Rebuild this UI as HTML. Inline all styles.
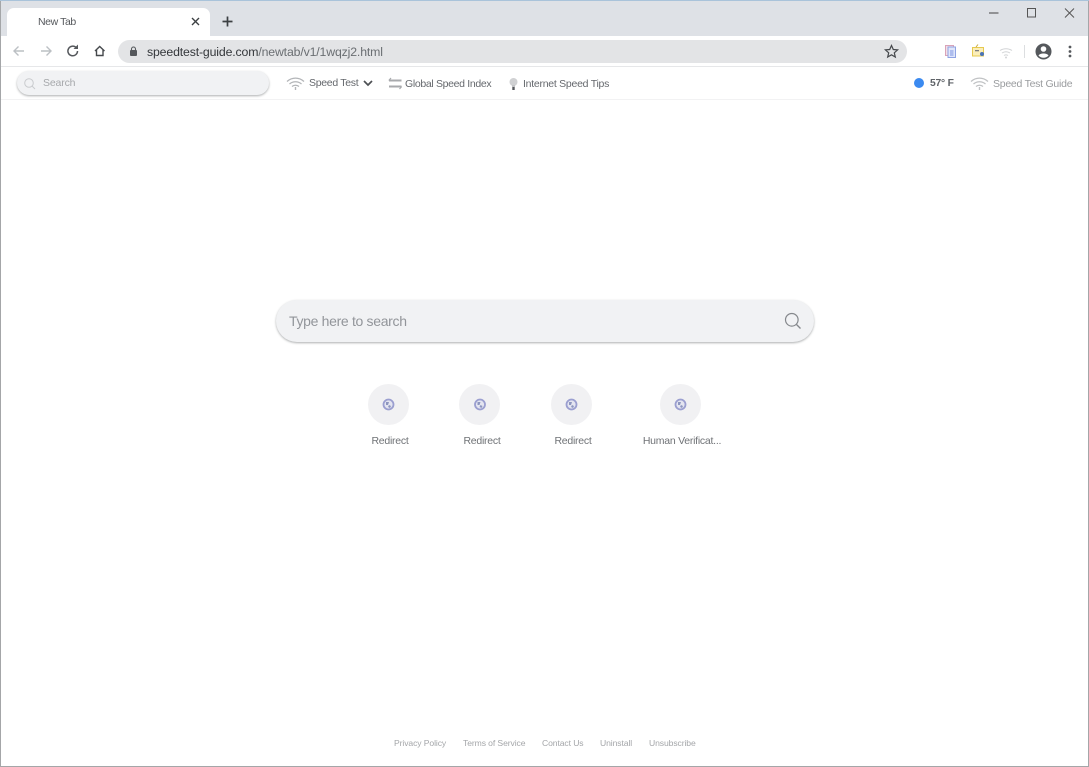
<!DOCTYPE html>
<html><head><meta charset="utf-8"><style>
html,body{margin:0;padding:0;background:#fff}
body{width:1089px;height:767px;position:relative;overflow:hidden;font-family:"Liberation Sans",sans-serif;filter:blur(.3px)}
.a{position:absolute}
.t{position:absolute;white-space:nowrap;line-height:14px}
svg{position:absolute;overflow:visible}
.c{position:absolute;width:41px;height:41px;top:384px;border-radius:50%;background:#f1f1f3}
.l{position:absolute;top:434px;height:14px;line-height:14px;font-size:10.5px;letter-spacing:-.25px;color:#6f7276;white-space:nowrap;text-align:center}
.f{position:absolute;top:737px;line-height:12px;font-size:8.6px;letter-spacing:-.1px;color:#a4a6a9;white-space:nowrap}
</style></head><body>
<div class="a" style="left:0;top:0;width:1089px;height:36px;background:#dee1e6"></div>
<div class="a" style="left:0;top:0;width:1089px;height:1px;background:#a9c3da"></div>
<div class="a" style="left:7px;top:8px;width:203px;height:28px;background:#fff;border-radius:7px 7px 0 0"></div>
<div class="t" style="left:38px;top:15px;font-size:10.5px;letter-spacing:-.4px;color:#55585c">New Tab</div>
<svg style="left:0;top:0" width="240" height="36"><path d="M192 18l7 7M199 18l-7 7" stroke="#3c4043" stroke-width="1.4" fill="none"/><path d="M227.500 16.500v10M222.500 21.500h10" stroke="#3c4043" stroke-width="1.700" fill="none"/></svg>
<svg style="left:980px;top:0" width="109" height="30"><path d="M9 13h9.500" stroke="#444" stroke-width="1"/><rect x="47.500" y="8.500" width="8" height="8.500" fill="none" stroke="#555" stroke-width="1"/><path d="M85 8.500l9 9M94 8.500l-9 9" stroke="#555" stroke-width="1" fill="none"/></svg>

<div class="a" style="left:1px;top:36px;width:1087px;height:30px;background:#fff"></div>
<div class="a" style="left:0;top:66px;width:1089px;height:1px;background:#e6e7e9"></div>
<svg style="left:0;top:36px" width="120" height="30" fill="none">
<path d="M24 15H14M18.500 10.500L14 15l4.500 4.500" stroke="#bcc0c4" stroke-width="1.400"/>
<path d="M41 15h10M46.500 10.500L51 15l-4.500 4.500" stroke="#bcc0c4" stroke-width="1.400"/>
<path d="M77.500 15a4.800 4.800 0 1 1-1.400-3.400" stroke="#55585c" stroke-width="1.500"/><path d="M78 8.500v4.500h-4.500z" fill="#55585c"/>
<path d="M95 15l4.700-4.500 4.800 4.500M96.500 14v5.500h6.500V14" stroke="#46494d" stroke-width="1.400"/>
</svg>
<div class="a" style="left:118px;top:40px;width:789px;height:23px;background:#e3e4e6;border-radius:12px"></div>
<svg style="left:128px;top:45px" width="12" height="13"><rect x="2" y="5" width="7" height="6" rx="1" fill="#55585c"/><path d="M3.500 5.500V4a2 2 0 0 1 4 0v1.500" fill="none" stroke="#55585c" stroke-width="1.100"/></svg>
<div class="t" style="left:147px;top:45px;font-size:12.300px;letter-spacing:-.15px;color:#34373b">speedtest-guide.com<span style="color:#6a6e72">/newtab/v1/1wqzj2.html</span></div>
<svg style="left:884px;top:44px" width="15" height="15"><path d="M7.500 1.500l1.800 4 4.300.4-3.300 2.900 1 4.200-3.800-2.200-3.800 2.200 1-4.200L1.400 5.900l4.300-.4z" fill="none" stroke="#45484c" stroke-width="1.200"/></svg>
<svg style="left:944px;top:42px" width="140" height="20" fill="none">
<rect x="1.500" y="3.500" width="8" height="10" fill="#f4dfe6" stroke="#d9a3b8"/><rect x="4" y="5" width="7.500" height="10.500" fill="#dfe6fb" stroke="#8fa3e3"/><path d="M6 9h3.500M6 11h3.500M6 13h3.500" stroke="#5c7ad8" stroke-width=".7"/>
<rect x="28.500" y="5.500" width="11" height="8.500" fill="#fbeeb9" stroke="#e6c94f"/><path d="M32 5l2-2.500" stroke="#c8a93a"/><rect x="31" y="8" width="4" height="1.300" fill="#7d7d7d"/><circle cx="38" cy="12" r="2" fill="#4a74b8"/>
<path d="M56 8.500a11 11 0 0 1 12 0M58 11a7.500 7.500 0 0 1 8 0M60 13.500a4 4 0 0 1 4 0" stroke="#d2d4d6" stroke-width="1"/><circle cx="62" cy="15.500" r="1" fill="#d2d4d6"/>
<path d="M80.500 3v13" stroke="#dcdee0"/>
<circle cx="99.500" cy="9.500" r="8" fill="#55585c"/><circle cx="99.500" cy="7" r="2.800" fill="#fff"/><path d="M94.500 13.500c1.500-2.600 8.500-2.600 10 0-1.300 1.500-2.800 2.200-5 2.200s-3.700-.7-5-2.200z" fill="#fff"/>
<circle cx="126" cy="5" r="1.400" fill="#55585c"/><circle cx="126" cy="9.500" r="1.400" fill="#55585c"/><circle cx="126" cy="14" r="1.400" fill="#55585c"/>
</svg>

<div class="a" style="left:0;top:99px;width:1089px;height:1px;background:#f2f2f3"></div>
<div class="a" style="left:17px;top:71px;width:252px;height:24px;background:#f1f2f4;border-radius:12px;box-shadow:0 1px 2px rgba(60,64,67,.42)"></div>
<svg style="left:23px;top:77px" width="14" height="14" fill="none"><circle cx="6" cy="6" r="4.300" stroke="#c9cbce" stroke-width="1"/><path d="M9 9l3 3" stroke="#c9cbce"/></svg>
<div class="t" style="left:43px;top:76px;font-size:10.500px;letter-spacing:-.15px;color:#a6a8ab">Search</div>

<svg style="left:286px;top:76px" width="19" height="15" fill="none" stroke="#b3b5b8" stroke-width="1.300"><path d="M1 5.500c5-4.500 12-4.500 17 0M3.500 8c3.500-3 8.500-3 12 0M6 10.500c2-1.700 5-1.700 7 0"/><path d="M9.500 11v3" stroke-width="1.400"/></svg>
<div class="t" style="left:309px;top:76px;font-size:10.500px;letter-spacing:-.3px;color:#65686d">Speed Test</div>
<svg style="left:362px;top:79px" width="12" height="9" fill="none"><path d="M2 2l4 4 4-4" stroke="#4d5054" stroke-width="1.700"/></svg>
<svg style="left:388px;top:77px" width="15" height="13" fill="none" stroke="#a8aaad" stroke-width="2"><path d="M1 3.500h12.500M1 9.500h12.500"/><path d="M3 1L.8 3.500M11.500 12l2.200-2.500" stroke-width="1.200"/></svg>
<div class="t" style="left:405px;top:77px;font-size:10.500px;letter-spacing:-.33px;color:#65686d">Global Speed Index</div>
<svg style="left:508px;top:77px" width="11" height="14"><circle cx="5.500" cy="5" r="4" fill="#d0d1d3"/><rect x="4" y="8" width="3" height="2" fill="#c4c5c7"/><rect x="4.300" y="10" width="2.400" height="3" fill="#55585c"/></svg>
<div class="t" style="left:523px;top:77px;font-size:10.500px;letter-spacing:-.26px;color:#65686d">Internet Speed Tips</div>

<div class="a" style="left:914px;top:78px;width:10px;height:10px;border-radius:50%;background:#3b8af0"></div>
<div class="t" style="left:930px;top:77px;font-size:10.300px;letter-spacing:-.2px;font-weight:bold;color:#5f6368">57° F</div>
<svg style="left:970px;top:76px" width="19" height="15" fill="none" stroke="#c0c2c4" stroke-width="1.300"><path d="M1 5.500c5-4.500 12-4.500 17 0M3.500 8c3.500-3 8.500-3 12 0M6 10.500c2-1.700 5-1.700 7 0"/><path d="M9.500 11v3" stroke-width="1.400"/></svg>
<div class="t" style="left:993px;top:76.500px;font-size:10.500px;letter-spacing:-.25px;color:#9a9c9f">Speed Test Guide</div>

<div class="a" style="left:276px;top:300px;width:538px;height:42px;background:#f1f2f4;border-radius:21px;box-shadow:0 1px 2px rgba(60,64,67,.42)"></div>
<div class="t" style="left:289px;top:314px;font-size:14px;letter-spacing:-.32px;color:#92959a">Type here to search</div>
<svg style="left:784px;top:312px" width="18" height="18" fill="none"><circle cx="7.800" cy="7.800" r="6.300" stroke="#85888c" stroke-width="1.200"/><path d="M12.500 12.500l4 4" stroke="#85888c" stroke-width="1.300"/></svg>

<div class="c" style="left:368px"></div>
<div class="c" style="left:459px"></div>
<div class="c" style="left:551px"></div>
<div class="c" style="left:660px"></div>
<svg style="left:0;top:0" width="1089" height="767" fill="none">
<g stroke="#9b9fd0" stroke-width="1.800" fill="#e4e5f0"><circle cx="388.500" cy="404.500" r="5"/><circle cx="480" cy="404.500" r="5"/><circle cx="571.500" cy="404.500" r="5"/><circle cx="680.500" cy="404.500" r="5"/></g>
<g fill="#8d96bf"><path d="M386 402h3l-1 3h-2zM389 405l2 1-1 2-2-1z"/><path d="M477.500 402h3l-1 3h-2zM480.500 405l2 1-1 2-2-1z"/><path d="M569 402h3l-1 3h-2zM572 405l2 1-1 2-2-1z"/><path d="M678 402h3l-1 3h-2zM681 405l2 1-1 2-2-1z"/></g>
</svg>
<div class="l" style="left:350px;width:80px">Redirect</div>
<div class="l" style="left:442px;width:80px">Redirect</div>
<div class="l" style="left:533px;width:80px">Redirect</div>
<div class="l" style="left:632px;width:100px">Human Verificat...</div>

<div class="f" style="left:394px">Privacy Policy</div>
<div class="f" style="left:463px">Terms of Service</div>
<div class="f" style="left:542px">Contact Us</div>
<div class="f" style="left:600px">Uninstall</div>
<div class="f" style="left:649px">Unsubscribe</div>

<div class="a" style="left:0;top:1px;width:1px;height:766px;background:#a4a6a8"></div>
<div class="a" style="left:1088px;top:1px;width:1px;height:766px;background:#a4a6a8"></div>
<div class="a" style="left:0;top:766px;width:1089px;height:1px;background:#a4a6a8"></div>
</body></html>
